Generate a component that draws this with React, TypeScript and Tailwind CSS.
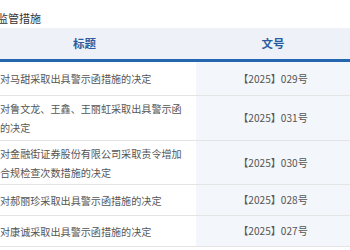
import React from 'react'

const rows = [
  { title: '对马甜采取出具警示函措施的决定', no: '【2025】029号', h: 'h-[33px]' },
  { title: '对鲁文龙、王鑫、王丽虹采取出具警示函的决定', no: '【2025】031号', h: 'h-[44px]' },
  { title: '对金融街证券股份有限公司采取责令增加合规检查次数措施的决定', no: '【2025】030号', h: 'h-[43px]' },
  { title: '对郝丽珍采取出具警示函措施的决定', no: '【2025】028号', h: 'h-[30px]' },
  { title: '对康诚采取出具警示函措施的决定', no: '【2025】027号', h: 'h-[30px]' },
]

export default function App() {
  return (
    <div className="w-[350px] h-[250px] overflow-hidden bg-white font-['Noto_Sans_CJK_SC','Noto_Sans',sans-serif]">
      <div className="-ml-[27px] w-[377px]">
        <div className="h-[28px] pt-[10px] pl-[24px] text-[11px] leading-[16px] text-[#333]">监管措施</div>

        <div className="grid grid-cols-[223px_154px] h-[34px] bg-[#eef2f8] border-b-[3px] border-[#2566b0] text-[11.5px] font-bold text-[#2a5d9f]">
          <div className="flex items-center justify-center">标题</div>
          <div className="flex items-center justify-center">文号</div>
        </div>

        {rows.map((r) => (
          <div key={r.no} className={`grid grid-cols-[223px_154px] border-b border-[#e4e4e4] ${r.h} box-content`}>
            <div className="flex items-center pl-[27px] pr-[8px] text-[10.1px] leading-[19px] text-[#555]">
              {r.title}
            </div>
            <div className="flex items-center justify-center bg-[#f3f6fa] text-[10.1px] text-[#555]">
              {r.no}
            </div>
          </div>
        ))}
      </div>
    </div>
  )
}
